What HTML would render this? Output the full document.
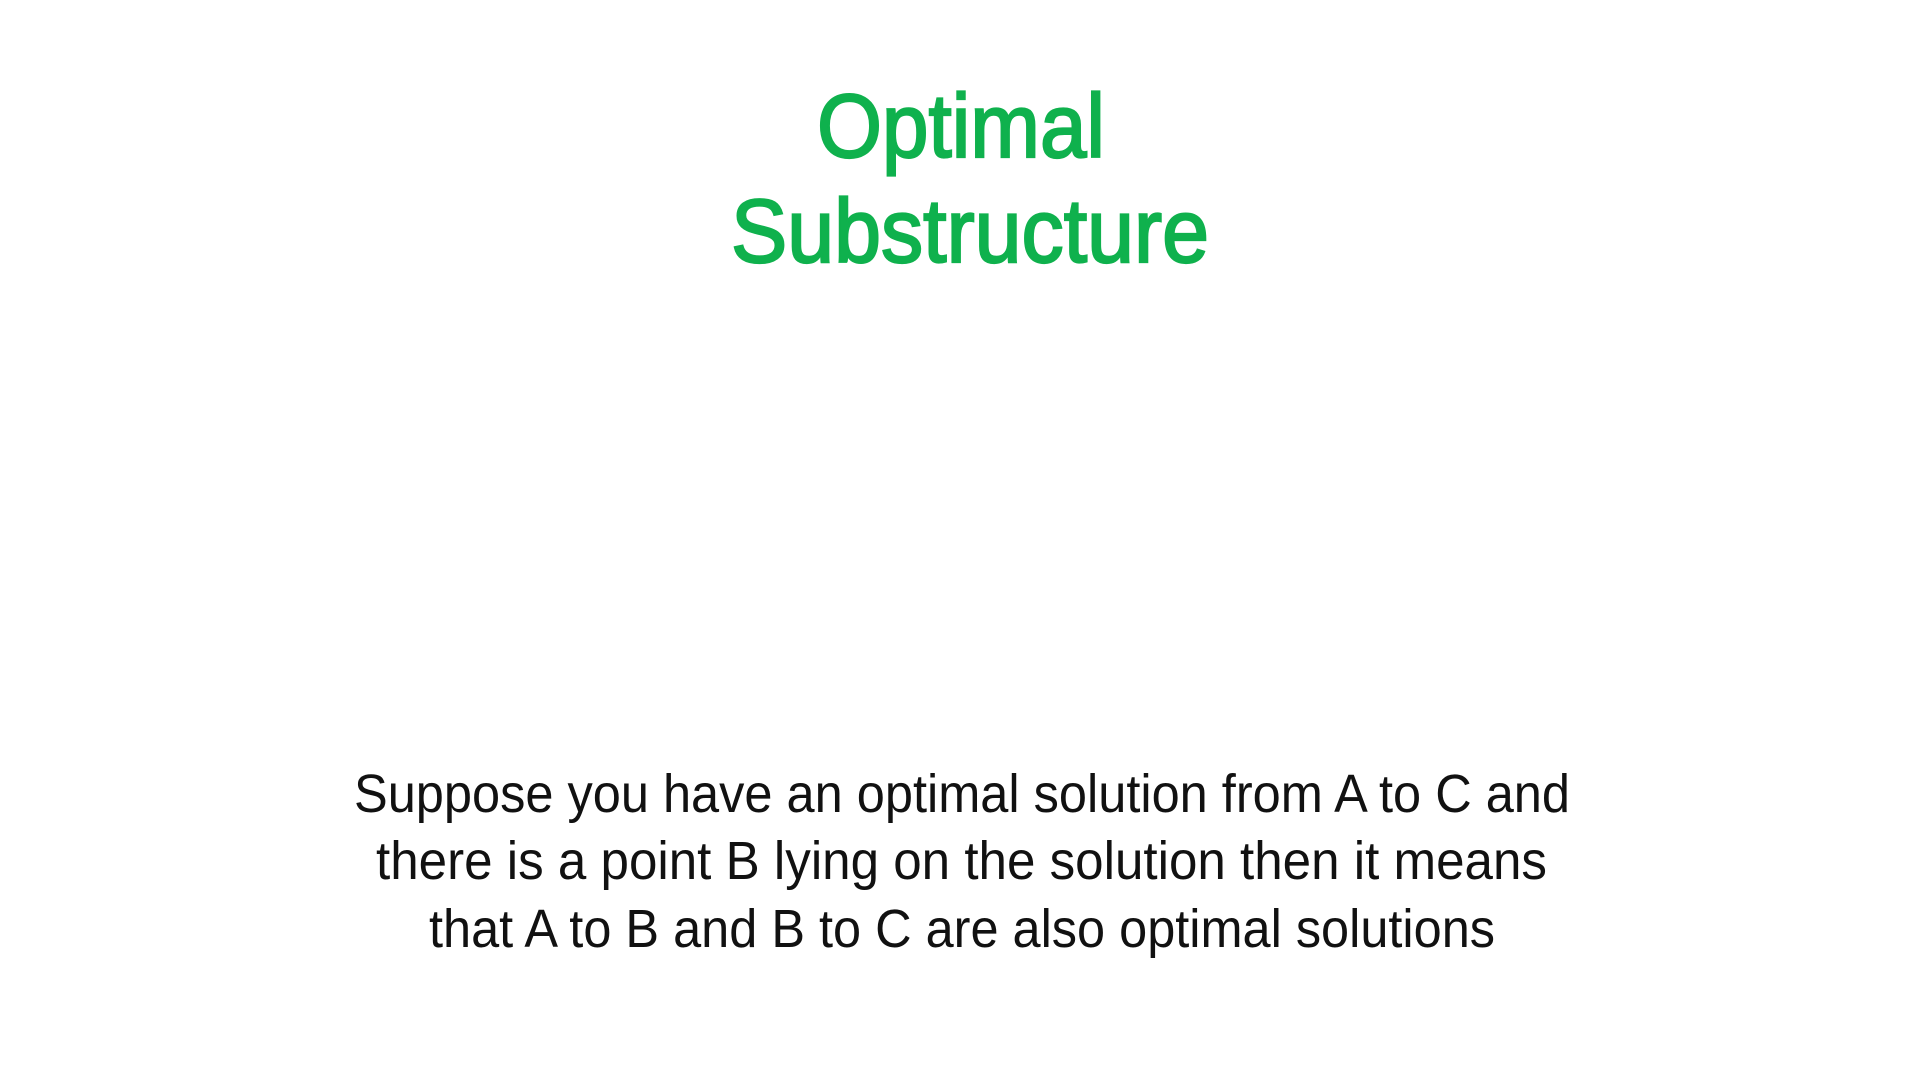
<!DOCTYPE html>
<html><head><style>html,body{margin:0;padding:0;background:#fff;width:1920px;height:1088px;overflow:hidden}</style></head>
<body>
<svg width="1920" height="1088" xmlns="http://www.w3.org/2000/svg">
<g font-family="Liberation Sans, Arial, sans-serif" fill="#0fb14d" stroke="#0fb14d" stroke-width="2.2" font-size="90">
<text x="817" y="157" textLength="288" lengthAdjust="spacingAndGlyphs">Optimal</text>
<text x="731" y="262" textLength="478" lengthAdjust="spacingAndGlyphs">Substructure</text>
</g>
<g font-family="Liberation Sans, Arial, sans-serif" fill="#111" font-size="54">
<text x="354" y="812" textLength="1216" lengthAdjust="spacingAndGlyphs">Suppose you have an optimal solution from A to C and</text>
<text x="376" y="879" textLength="1171" lengthAdjust="spacingAndGlyphs">there is a point B lying on the solution then it means</text>
<text x="429" y="947" textLength="1066" lengthAdjust="spacingAndGlyphs">that A to B and B to C are also optimal solutions</text>
</g>
</svg>
</body></html>
